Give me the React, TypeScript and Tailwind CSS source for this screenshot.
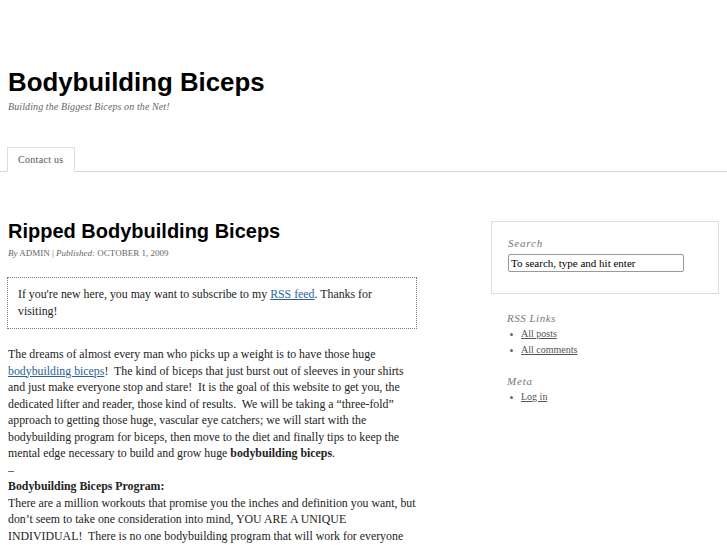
import React from "react";

const serif = "font-['Liberation_Serif','Times_New_Roman',serif]";
const sans = "font-['Liberation_Sans',Arial,sans-serif]";

export default function App() {
  return (
    <div className={`min-h-screen bg-white text-[#222] ${serif}`}>
      {/* Header */}
      <header className="px-2 pt-[67px]">
        <h1 className={`${sans} text-[25.8px] font-bold leading-[30px] text-black`}>
          Bodybuilding Biceps
        </h1>
        <p className="mt-[3px] text-[10px] italic leading-[14px] tracking-[0.1px] text-[#666]">
          Building the Biggest Biceps on the Net!
        </p>
      </header>

      {/* Nav */}
      <nav className="mt-[33px] border-b border-[#d8d8d8] px-[7px]">
        <ul className="flex">
          <li className="-mb-px border border-b-white border-[#dddddd] bg-white px-[10px] pt-[5px] pb-[5px] text-[10px] leading-[13px] tracking-[0.3px] text-[#555]">
            Contact us
          </li>
        </ul>
      </nav>

      <div className="flex gap-[74px] px-2 pt-[47px]">
        {/* Main column */}
        <main className="w-[409px] shrink-0">
          <h2 className={`${sans} text-[20px] font-bold leading-[24px] text-black`}>
            Ripped Bodybuilding Biceps
          </h2>
          <p className="mt-[4px] text-[9px] leading-[12px] text-[#666]">
            <em>By</em> ADMIN | <em>Published:</em> OCTOBER 1, 2009
          </p>

          <div className="-ml-px mt-[18px] border border-dotted border-[#777] px-[10px] py-[8px] text-[11.85px] leading-[17px] text-[#222]">
            If you're new here, you may want to subscribe to my{" "}
            <a className="text-[#2a5f9c] underline">RSS feed</a>. Thanks for visiting!
          </div>

          <div className="mt-[17px] text-[11.85px] leading-[16.5px] text-[#222]">
            <p>
              The dreams of almost every man who picks up a weight is to have those huge{" "}
              <a className="text-[#2a5f9c] underline">bodybuilding biceps</a>!&nbsp; The kind of
              biceps that just burst out of sleeves in your shirts and just make everyone stop and
              stare!&nbsp; It is the goal of this website to get you, the dedicated lifter and
              reader, those kind of results.&nbsp; We will be taking a “three-fold” approach to
              getting those huge, vascular eye catchers; we will start with the bodybuilding program
              for biceps, then move to the diet and finally tips to keep the mental edge necessary to
              build and grow huge <strong>bodybuilding biceps</strong>.
            </p>
            <p>–</p>
            <p>
              <strong>Bodybuilding Biceps Program:</strong>
            </p>
            <p>
              There are a million workouts that promise you the inches and definition you want, but
              don’t seem to take one consideration into mind, YOU ARE A UNIQUE INDIVIDUAL!&nbsp;
              There is no one bodybuilding program that will work for everyone
            </p>
          </div>
        </main>

        {/* Sidebar */}
        <aside className="mt-[2px] w-[228px] shrink-0">
          <div className="border border-[#dddddd] px-[16px] pt-[14px] pb-[19px]">
            <h3 className="text-[11px] italic leading-[14px] tracking-[0.8px] text-[#777]">
              Search
            </h3>
            <input
              readOnly
              value="To search, type and hit enter"
              className="mt-[4px] h-[18px] w-[176px] rounded-[2px] border border-[#999] bg-white px-[2px] text-[11px] leading-[14px] text-black outline-none"
            />
          </div>

          <div className="px-[16px]">
            <h3 className="mt-[17px] text-[11px] italic leading-[14px] tracking-[0.5px] text-[#777]">
              RSS Links
            </h3>
            <ul className="mt-[1px] pl-[3px] text-[10px] leading-[16px] text-[#555]">
              <li className="flex items-center gap-[8px]">
                <span className="h-[3px] w-[3px] rounded-full bg-[#666]" />
                <a className="underline">All posts</a>
              </li>
              <li className="flex items-center gap-[8px]">
                <span className="h-[3px] w-[3px] rounded-full bg-[#666]" />
                <a className="underline">All comments</a>
              </li>
            </ul>

            <h3 className="mt-[16px] text-[11px] italic leading-[14px] tracking-[0.8px] text-[#777]">
              Meta
            </h3>
            <ul className="mt-[1px] pl-[3px] text-[10px] leading-[16px] text-[#555]">
              <li className="flex items-center gap-[8px]">
                <span className="h-[3px] w-[3px] rounded-full bg-[#666]" />
                <a className="underline">Log in</a>
              </li>
            </ul>
          </div>
        </aside>
      </div>
    </div>
  );
}
